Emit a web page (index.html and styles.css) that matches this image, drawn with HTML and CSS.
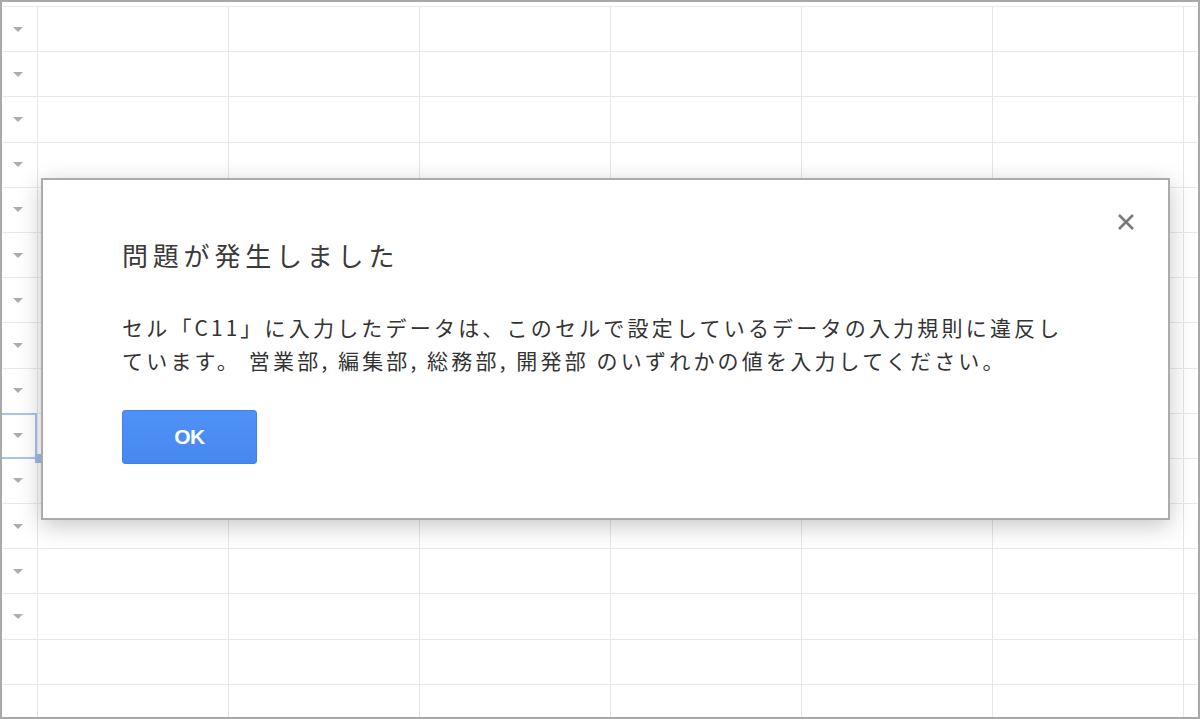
FILE: index.html
```html
<!DOCTYPE html>
<html lang="ja">
<head>
<meta charset="utf-8">
<title>問題が発生しました</title>
<link rel="stylesheet" href="styles.css">
</head>
<body>
<div class="frame">
  <div class="sheet">
    <div class="row"><div class="cell-a"><span class="arrow"></span></div></div>
    <div class="row"><div class="cell-a"><span class="arrow"></span></div></div>
    <div class="row"><div class="cell-a"><span class="arrow"></span></div></div>
    <div class="row"><div class="cell-a"><span class="arrow"></span></div></div>
    <div class="row"><div class="cell-a"><span class="arrow"></span></div></div>
    <div class="row"><div class="cell-a"><span class="arrow"></span></div></div>
    <div class="row"><div class="cell-a"><span class="arrow"></span></div></div>
    <div class="row"><div class="cell-a"><span class="arrow"></span></div></div>
    <div class="row"><div class="cell-a"><span class="arrow"></span></div></div>
    <div class="row"><div class="cell-a selected"><span class="arrow"></span></div></div>
    <div class="row"><div class="cell-a"><span class="arrow"></span></div></div>
    <div class="row"><div class="cell-a"><span class="arrow"></span></div></div>
    <div class="row"><div class="cell-a"><span class="arrow"></span></div></div>
    <div class="row"><div class="cell-a"><span class="arrow"></span></div></div>
    <div class="row"><div class="cell-a"></div></div>
    <div class="row"><div class="cell-a"></div></div>
  </div>

  <div class="dialog" role="dialog">
    <button class="close" aria-label="閉じる">
      <svg width="20" height="20" viewBox="0 0 20 20"><path d="M3 3 L17 17 M17 3 L3 17" stroke="#7a7a7a" stroke-width="2.6" stroke-linecap="butt" fill="none"/></svg>
    </button>
    <h1 class="title">問題が発生しました</h1>
    <p class="message">セル「<span class="latin">C11</span>」に入力したデータは、このセルで設定しているデータの入力規則に違反し<br>ています。 営業部<span class="latin">, </span>編集部<span class="latin">, </span>総務部<span class="latin">, </span>開発部<span class="latin"> </span>のいずれかの値を入力してください。</p>
    <button class="ok">OK</button>
  </div>
</div>
</body>
</html>
```

FILE: styles.css
```css
html, body {
  margin: 0;
  padding: 0;
  background: #ffffff;
}

.frame {
  position: relative;
  width: 1200px;
  height: 719px;
  box-sizing: border-box;
  border: 2px solid #a9a9a9;
  background: #ffffff;
  overflow: hidden;
}

.sheet {
  margin-top: 4px;
  border-top: 1px solid #e8e8e8;
  height: 100%;
  background-image: linear-gradient(to right, #e6e6e6 1px, transparent 1px);
  background-size: 191px 100%;
  background-position: 226px 0;
  background-repeat: repeat-x;
}

.row {
  height: 45.2px;
  box-sizing: border-box;
  border-bottom: 1px solid #e8e8e8;
  display: flex;
  align-items: center;
}

.cell-a {
  width: 35px;
  height: 100%;
  box-sizing: border-box;
  padding-left: 11px;
  display: flex;
  align-items: center;
}

.arrow {
  width: 0;
  height: 0;
  border-left: 5px solid transparent;
  border-right: 5px solid transparent;
  border-top: 5px solid #adadad;
}

.selected {
  position: relative;
}

.selected::before {
  content: "";
  position: absolute;
  top: -1px;
  bottom: -1px;
  left: -2px;
  right: 0;
  border: 2px solid #a9c3ef;
}

.selected::after {
  content: "";
  position: absolute;
  right: -6px;
  bottom: -5px;
  width: 8px;
  height: 9px;
  background: #9fbaeb;
}

.dialog {
  position: absolute;
  left: 39px;
  top: 176px;
  width: 1129px;
  height: 342px;
  box-sizing: border-box;
  border: 2px solid #ababab;
  background: #ffffff;
  box-shadow: 0 6px 22px rgba(0, 0, 0, 0.22);
  padding: 59px 40px 0 79px;
  font-family: "Noto Sans CJK JP", "Noto Sans", sans-serif;
  z-index: 2;
}

.close {
  position: absolute;
  top: 32px;
  right: 32px;
  width: 20px;
  height: 20px;
  padding: 0;
  margin: 0;
  border: 0;
  background: transparent;
  display: flex;
}

.title {
  margin: 0;
  font-size: 26px;
  line-height: 32px;
  font-weight: 400;
  letter-spacing: 4.8px;
  color: #3a3a3a;
}

.message {
  margin: 40px 0 0 0;
  font-size: 21px;
  line-height: 33px;
  letter-spacing: 3.2px;
  color: #333333;
  white-space: nowrap;
}

.latin {
  letter-spacing: 3px;
}

.ok {
  margin-top: 33px;
  width: 135px;
  height: 54px;
  box-sizing: border-box;
  border: 1px solid #3f80ea;
  border-radius: 3px;
  background: linear-gradient(#4f92f7, #4788ef);
  color: #ffffff;
  font-family: "Liberation Sans", Arial, sans-serif;
  font-weight: 700;
  font-size: 21px;
  letter-spacing: -0.5px;
  padding: 0;
  display: block;
}
```
